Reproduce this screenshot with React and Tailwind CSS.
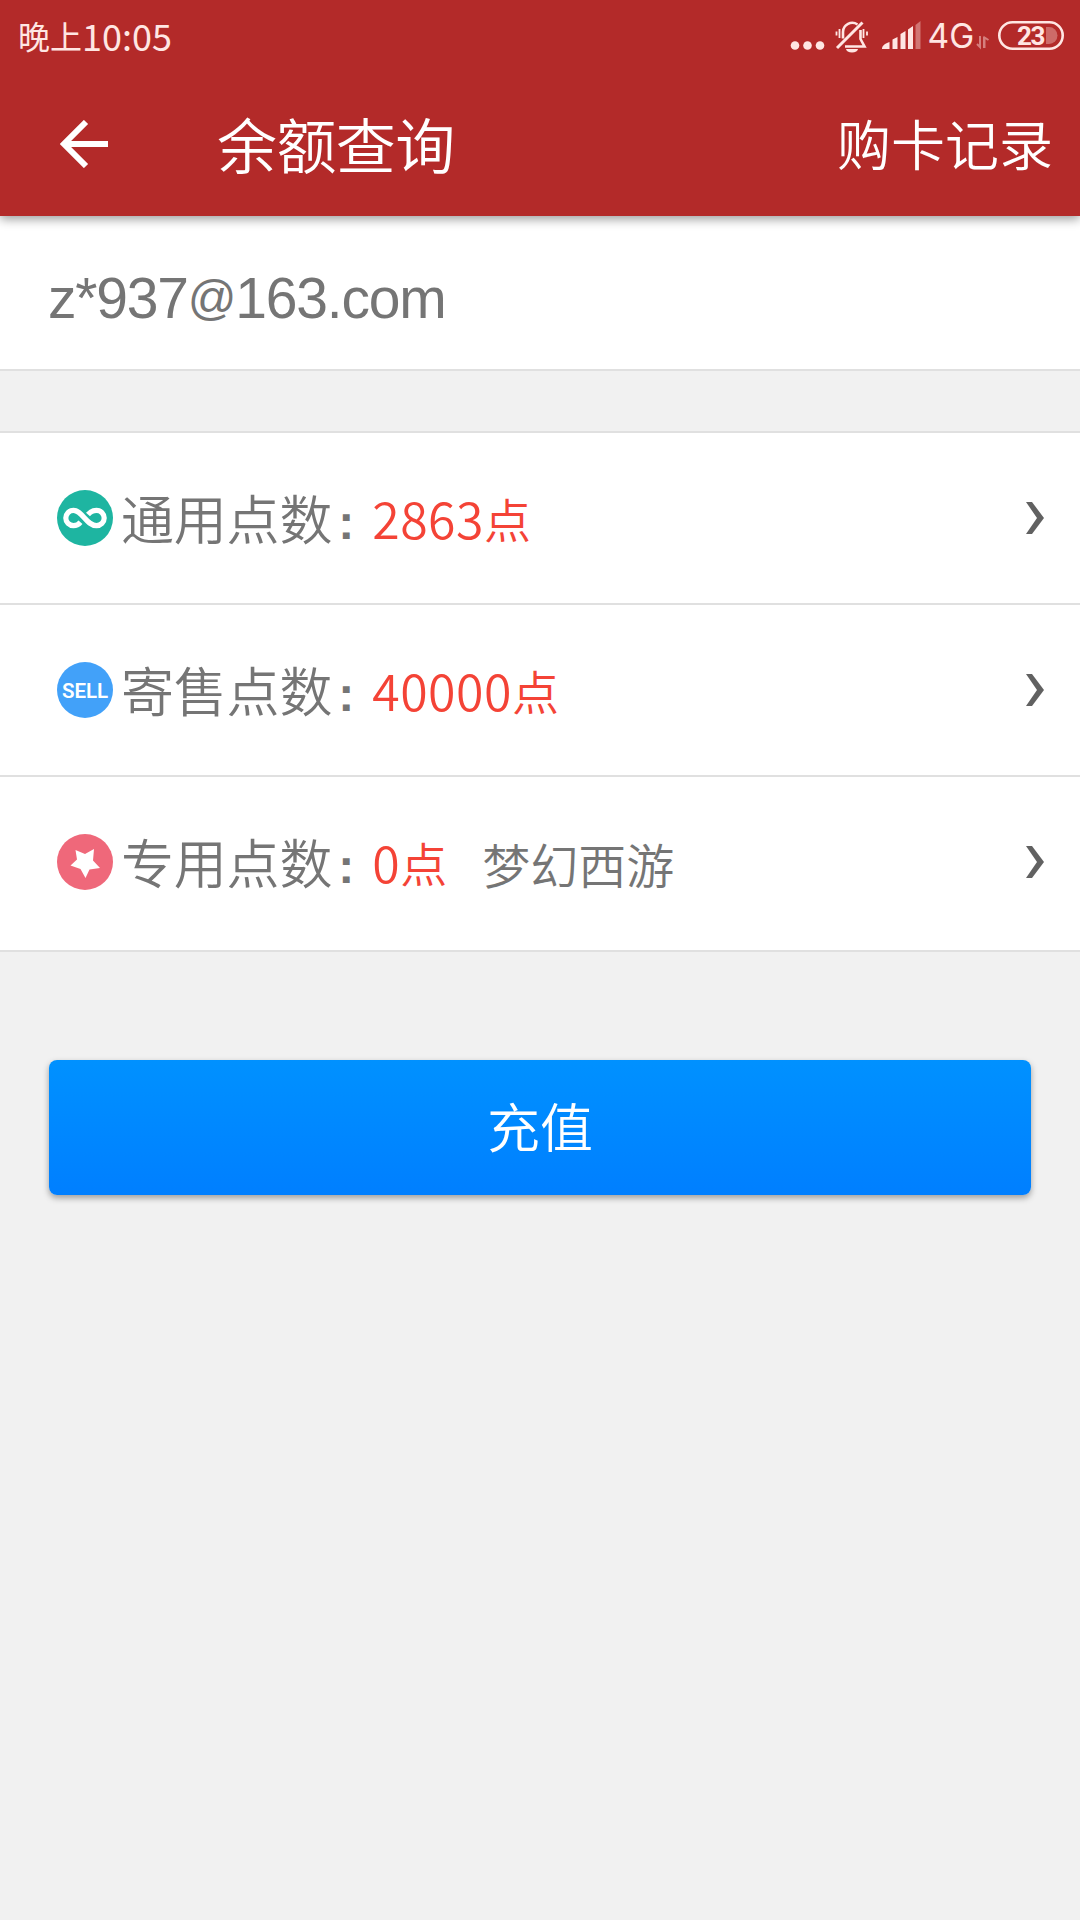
const ROWS = [
  { icon: InfinityIcon, label: "通用点数", amount: "2863", height: "h-[172px]" },
  { icon: SellIcon, label: "寄售点数", amount: "40000", height: "h-[172px]" },
  { icon: StarIcon, label: "专用点数", amount: "0", game: "梦幻西游", height: "h-[175px] pb-[3px]" },
];

export default function App() {
  return (
    <div className="flex h-[1920px] w-[1080px] flex-col overflow-hidden bg-[#f1f1f1] font-['Noto_Sans_CJK_SC',sans-serif]">
      <header className="relative z-10 h-[216px] shrink-0 bg-[#b32a29] text-white shadow-[0_3px_10px_rgba(0,0,0,0.4)]">
        <StatusBar />
        <div className="flex h-[144px] items-center pr-[27px] pl-[60px]">
          <BackArrow />
          <h1 className="-mt-[3px] ml-[109px] text-[60px] leading-[72px] font-[350] tracking-[-0.6px]">余额查询</h1>
          <span className="-mt-[3px] ml-auto text-[54px] leading-[72px] font-[350]">购卡记录</span>
        </div>
      </header>

      {/* Account */}
      <div className="flex h-[155px] shrink-0 items-center border-b-2 border-[#e0e0e0] bg-white pt-[10px] pl-[48px]">
        <span className="font-['Liberation_Sans',sans-serif] text-[57px] leading-[72px] tracking-[-1.2px] text-[#757575]">
          z*937<span className="inline-block -translate-y-[4px] text-[48px] leading-none">@</span>163.com
        </span>
      </div>

      {/* Balances */}
      <div className="mt-[60px] border-t-2 border-[#e0e0e0] bg-white">
        {ROWS.map((row) => (
          <BalanceRow key={row.label} {...row} />
        ))}
      </div>

      <button className="mx-[49px] mt-[108px] h-[135px] shrink-0 rounded-[8px] bg-linear-to-b from-[#0091ff] to-[#007fff] pb-[4px] text-[53px] font-[350] text-white shadow-[0_3px_6px_rgba(0,0,0,0.35)]">
        充值
      </button>
    </div>
  );
}

function StatusBar() {
  return (
    <div className="flex h-[72px] items-center pr-[16px] pl-[18px] text-[#ffe6e3]">
      <span className="-mt-[2px] text-[32px] leading-[40px]">晚上</span>
      <span className="-mt-[3px] text-[36px] leading-[40px]">10:05</span>
      <svg className="ml-auto" width="275" height="40" viewBox="789 16 275 40" fill="currentColor">
        <circle cx="795" cy="45.5" r="4.3" />
        <circle cx="807.500" cy="45.5" r="4.3" />
        <circle cx="820" cy="45.5" r="4.3" />
        {/* muted bell */}
        <g fill="none" stroke="currentColor" strokeWidth="2.6">
          <path d="M843 38.500V32a9.300 9.300 0 0 1 14.500-7.500M860.500 30v9l4 7.500H845" />
          <path d="M837 48 862.500 22.500" strokeWidth="3" />
          <path d="M839.500 29v9M836.500 31.500v4M863.500 29v9M867 31.500v4" strokeWidth="1.8" />
        </g>
        <path d="M846 49h12a6 3.500 0 0 1-12 0z" />
        {/* signal */}
        <path d="M882 49c0-3 2-5 7.500-7v7zM892.500 39.500l5-2.500v12h-5zM900.500 34l5-3v18h-5zM908 29.500l5-3.500v23h-5z" />
        <path d="M915.500 25l5-4v28h-5z" opacity=".4" />
        <text x="927.500" y="48" className="font-[Inter,sans-serif] text-[33.5px] font-normal">4G</text>
        <g opacity=".45" fill="none" stroke="currentColor" strokeWidth="2">
          <path d="M980 36v11l-3-3M984 48V37" />
          <path d="M984.500 48V37.500l4 2.500" />
        </g>
        {/* battery */}
        <rect x="999.300" y="22.300" width="63.400" height="26.400" rx="13.200" fill="none" stroke="currentColor" strokeWidth="2.600" />
        <path d="M1046 27h3a8.500 8.500 0 0 1 0 17h-3z" opacity=".35" />
        <text x="1017" y="44.500" className="font-[Roboto,sans-serif] text-[26px] font-bold tracking-[-1.3px]">23</text>
      </svg>
    </div>
  );
}

function BackArrow() {
  return (
    <svg width="48" height="48" viewBox="0 0 48 48" fill="none" stroke="currentColor" strokeWidth="6">
      <path d="M48 24H4M26 2 4 24l22 22" />
    </svg>
  );
}

function BalanceRow({ icon: Icon, label, amount, game, height }) {
  return (
    <div className={`flex items-center border-b-2 border-[#e0e0e0] pr-[36px] pl-[57px] ${height}`}>
      <Icon />
      <div className="mt-[4px] flex items-baseline leading-[72px] font-[350] text-[#757575]">
        <span className="ml-[8px] text-[53px] tracking-[-0.2px]">{label}</span>
        <span className="ml-[6px] w-[34px] -translate-y-[1px] font-['Liberation_Sans',sans-serif] text-[48px] font-bold">:</span>
        <span className="-translate-y-[1px] text-[50px] tracking-[0.5px] text-[#f44336]">{amount}</span>
        <span className="-translate-y-[2px] text-[47px] text-[#f44336]">点</span>
        {game && <span className="ml-[35px] text-[48px]">{game}</span>}
      </div>
      <Chevron />
    </div>
  );
}

function Chevron() {
  return (
    <svg className="ml-auto" width="18" height="32" viewBox="0 0 18 32" fill="#616161">
      <path d="M0 0h6l12 16L6 32H0l11-16z" />
    </svg>
  );
}

function InfinityIcon() {
  return (
    <svg width="56" height="56" viewBox="0 0 56 56">
      <circle cx="28" cy="28" r="28" fill="#1eb5a1" />
      <path
        d="M23.500 32.300c-2 2.300-4 3.400-7 3.400a7.700 7.700 0 0 1 0-15.400c8.500 0 13 15.400 23 15.400a7.700 7.700 0 0 0 0-15.400c-4 0-6.300 1.600-8.500 4.200"
        fill="none"
        stroke="#fff"
        strokeWidth="5.200"
      />
    </svg>
  );
}

function SellIcon() {
  return (
    <span className="flex size-[56px] items-center justify-center rounded-full bg-[#42a1f9] pt-[3px] font-[Roboto,sans-serif] text-[20.5px] leading-none font-semibold text-white">
      SELL
    </span>
  );
}

function StarIcon() {
  return (
    <svg width="56" height="56" viewBox="0 0 56 56">
      <circle cx="28" cy="28" r="28" fill="#ef687a" />
      <path d="M18.500 16l9.500 4 9-5-1 11.500 7 7.500-10.500 1.500L28.500 44l-5-9L13.500 31.500l6.500-6z" fill="#fff" />
    </svg>
  );
}
